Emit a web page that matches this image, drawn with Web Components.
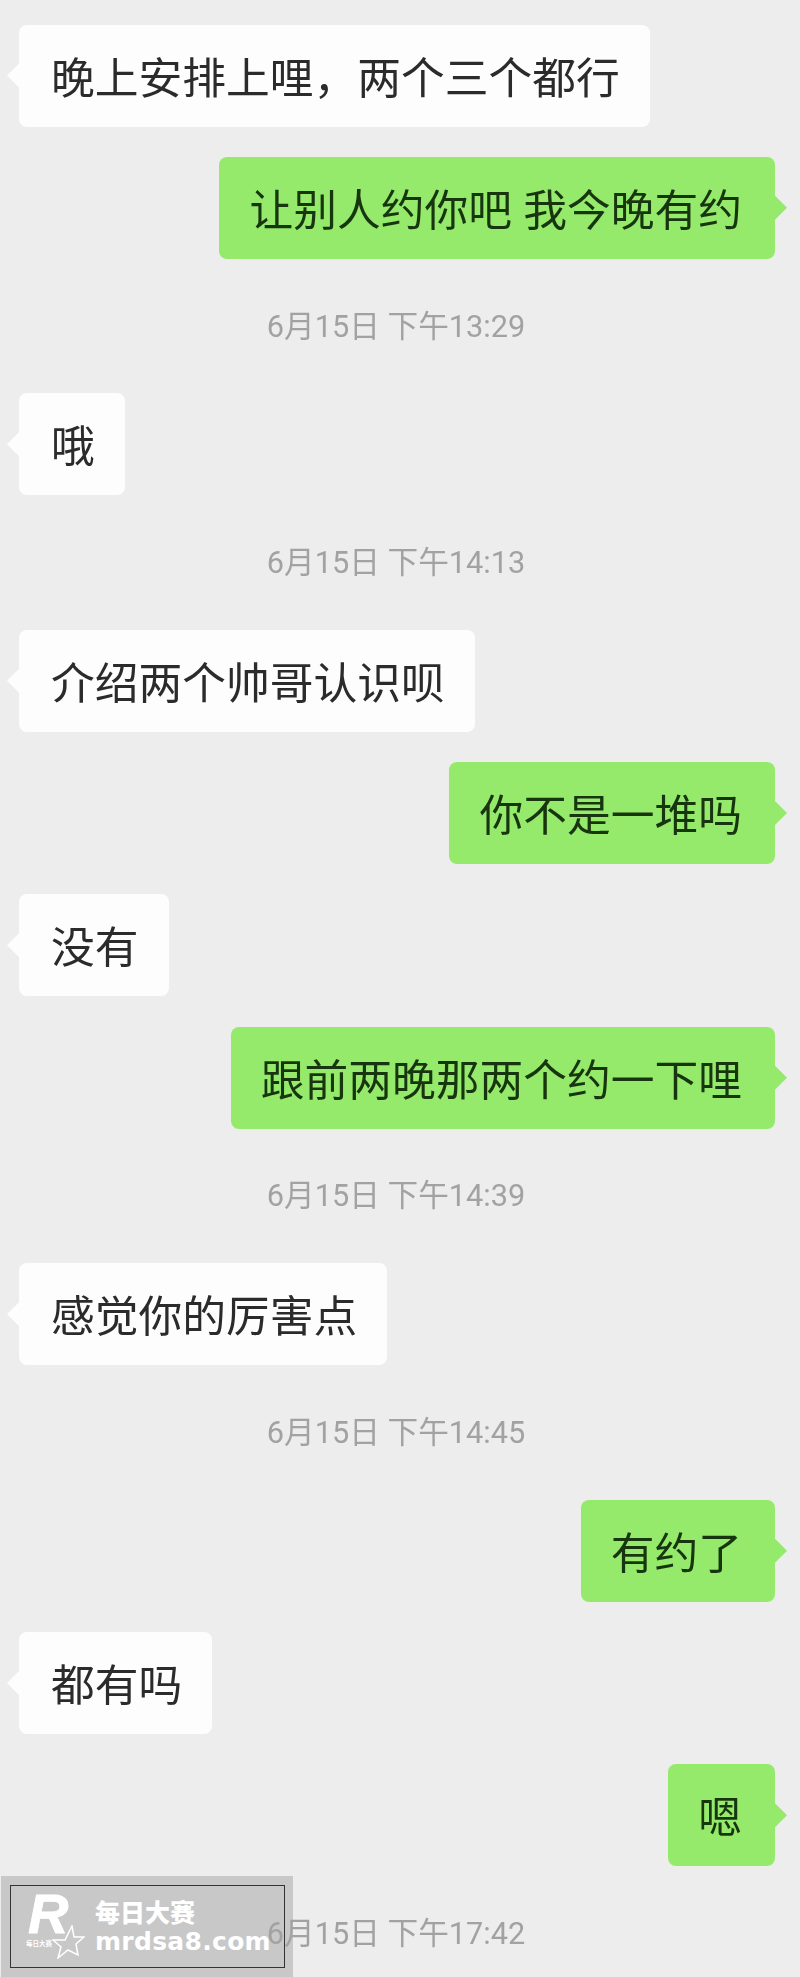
<!DOCTYPE html>
<html lang="zh">
<head>
<meta charset="utf-8">
<title>聊天记录</title>
<style>
  html, body { margin: 0; padding: 0; background: #ededed; }
  body { font-family: "Noto Sans CJK SC", "Liberation Sans", sans-serif; width: 800px; height: 1977px; overflow: hidden; position: relative; }
</style>
</head>
<body>
<chat-thread>
  <chat-bubble>晚上安排上哩，两个三个都行</chat-bubble>
  <chat-bubble side="right">让别人约你吧 我今晚有约</chat-bubble>
  <chat-time>6月15日 下午13:29</chat-time>
  <chat-bubble>哦</chat-bubble>
  <chat-time>6月15日 下午14:13</chat-time>
  <chat-bubble>介绍两个帅哥认识呗</chat-bubble>
  <chat-bubble side="right">你不是一堆吗</chat-bubble>
  <chat-bubble>没有</chat-bubble>
  <chat-bubble side="right">跟前两晚那两个约一下哩</chat-bubble>
  <chat-time>6月15日 下午14:39</chat-time>
  <chat-bubble>感觉你的厉害点</chat-bubble>
  <chat-time>6月15日 下午14:45</chat-time>
  <chat-bubble side="right">有约了</chat-bubble>
  <chat-bubble>都有吗</chat-bubble>
  <chat-bubble side="right">嗯</chat-bubble>
  <chat-time>6月15日 下午17:42</chat-time>
</chat-thread>
<site-badge></site-badge>

<script>
class ChatThread extends HTMLElement {
  connectedCallback() {
    this.attachShadow({ mode: 'open' });
    this.shadowRoot.innerHTML = `
      <style>
        :host { display: block; position: relative; z-index: 1; padding: 24.5px 25px 0 19px; }
        .list { display: flex; flex-direction: column; gap: 30.3px; }
      </style>
      <div class="list"><slot></slot></div>
    `;
  }
}

class ChatBubble extends HTMLElement {
  connectedCallback() {
    this.attachShadow({ mode: 'open' });
    this.shadowRoot.innerHTML = `
      <style>
        :host { display: flex; justify-content: flex-start; }
        :host([side="right"]) { justify-content: flex-end; }
        .bubble {
          position: relative;
          height: 102px;
          box-sizing: border-box;
          padding: 0 30px 0 32px;
          display: flex;
          align-items: center;
          background: #fdfdfd;
          border-radius: 8px;
          color: #2b2b2b;
          font-size: 43.75px;
          line-height: 1;
          white-space: pre;
          word-spacing: 1.5px;
          filter: blur(0.5px);
        }
        .bubble::before {
          content: "";
          position: absolute;
          top: 50%;
          left: -12px;
          width: 12px;
          height: 24px;
          margin-top: -12px;
          background: inherit;
          clip-path: polygon(100% 0, 0 50%, 100% 100%);
        }
        :host([side="right"]) .bubble { background: #95ea6b; color: #17350f; padding: 0 33px 0 30px; }
        :host([side="right"]) .bubble::before {
          left: auto;
          right: -12px;
          clip-path: polygon(0 0, 100% 50%, 0 100%);
        }
      </style>
      <div class="bubble"><slot></slot></div>
    `;
  }
}

class ChatTime extends HTMLElement {
  connectedCallback() {
    this.attachShadow({ mode: 'open' });
    this.shadowRoot.innerHTML = `
      <style>
        :host {
          display: block;
          height: 36px;
          margin: 19.5px 2px 18.4px 0;
          text-align: center;
          color: #a2a2a2;
          font-family: Roboto, "Noto Sans CJK SC", sans-serif;
          font-size: 30.7px;
          line-height: 36px;
          filter: blur(0.6px);
        }
      </style>
      <slot></slot>
    `;
  }
}

class SiteBadge extends HTMLElement {
  connectedCallback() {
    this.attachShadow({ mode: 'open' });
    this.shadowRoot.innerHTML = `
      <style>
        :host {
          position: absolute;
          left: 1px;
          bottom: 0;
          width: 292px;
          height: 101px;
          box-sizing: border-box;
          padding: 9px 8px 9px 9px;
          background: #c8c8c8;
          color: #fff;
        }
        .frame {
          box-sizing: border-box;
          height: 100%;
          border: 1px solid #333;
          display: flex;
          align-items: center;
          padding-left: 17px;
          gap: 9px;
        }
        .logo { position: relative; width: 58px; height: 74px; flex: none; }
        .r {
          position: absolute;
          left: 0;
          top: 0;
          font: italic 700 56px/48px "Liberation Sans", sans-serif;
          -webkit-text-stroke: 0.8px #fff;
        }
        .tiny {
          position: absolute;
          left: -2px;
          top: 49px;
          font: 700 6.5px/8px "Noto Sans CJK SC", sans-serif;
          white-space: nowrap;
        }
        svg { position: absolute; left: 24px; top: 35px; }
        .label { display: flex; flex-direction: column; gap: 5px; margin-top: -2px; }
        .cn { font: 900 25px/28px "Noto Sans CJK SC", sans-serif; }
        .en { font: 700 25px/24px "DejaVu Sans", sans-serif; letter-spacing: 0.3px; white-space: nowrap; }
      </style>
      <div class="frame">
        <div class="logo">
          <span class="r">R</span>
          <span class="tiny">每日大赛</span>
          <svg width="33" height="34" viewBox="0 0 33 34" fill="none" stroke="#fff" stroke-width="1.5">
            <polygon points="20,1 22,12 32,12 24,19 26,30 16,25 6,33 9,22 1,15 13,15"/>
          </svg>
        </div>
        <div class="label">
          <span class="cn">每日大赛</span>
          <span class="en">mrdsa8.com</span>
        </div>
      </div>
    `;
  }
}

customElements.define('chat-thread', ChatThread);
customElements.define('chat-bubble', ChatBubble);
customElements.define('chat-time', ChatTime);
customElements.define('site-badge', SiteBadge);
</script>
</body>
</html>
